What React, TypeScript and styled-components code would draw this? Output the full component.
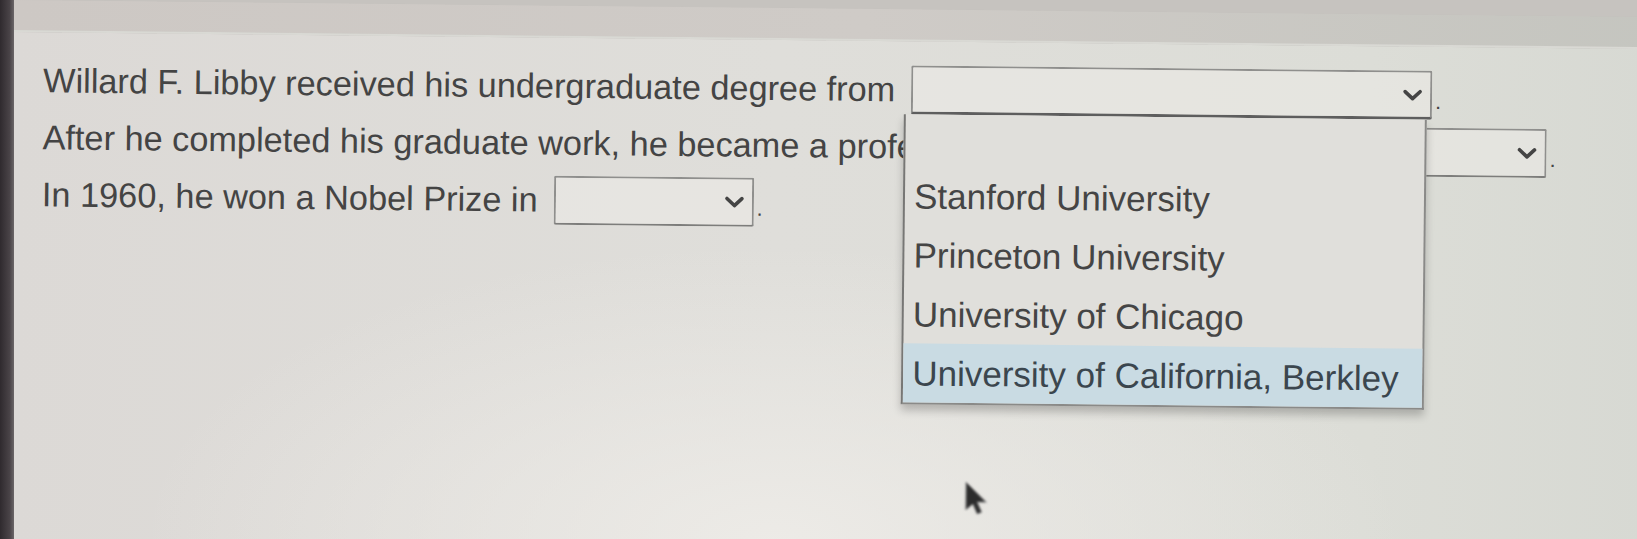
import React from 'react';
import styled, { createGlobalStyle } from 'styled-components';

const GlobalStyle = createGlobalStyle`
  html, body {
    margin: 0;
    padding: 0;
    overflow: hidden;
    background: #c8c4c1;
  }
`;

const Frame = styled.div`
  display: flex;
  width: 100vw;
  height: 100vh;
  overflow: hidden;
`;

// dark monitor edge on the left
const Bezel = styled.div`
  width: 14px;
  flex-shrink: 0;
  background: linear-gradient(90deg, #2f2a2e 0%, #4a4448 70%, #6b6668 100%);
`;

const Viewport = styled.div`
  position: relative;
  flex: 1;
  overflow: hidden;
  background: #c6c3bf;
`;

// the whole screen sits a little tilted
const Screen = styled.div`
  width: 1700px;
  height: 620px;
  display: flex;
  flex-direction: column;
  transform: rotate(0.6deg);
  transform-origin: 0 0;
`;

const TopBar = styled.div`
  height: 30px;
  flex-shrink: 0;
  background: linear-gradient(90deg, #cdc8c4 0%, #cfcbc7 50%, #c4c5bf 100%);
  border-bottom: 2px solid #d9d9d4;
  box-shadow: 0 1px 2px rgba(0, 0, 0, 0.08);
`;

const Sheet = styled.div`
  position: relative;
  flex: 1;
  display: flex;
  flex-direction: column;
  padding: 20px 0 0 30px;
  background:
    radial-gradient(ellipse 900px 420px at 45% 85%, rgba(238, 236, 232, 0.9), rgba(238, 236, 232, 0) 70%),
    linear-gradient(90deg, #dcd9d6 0%, #dfdeda 45%, #dcddd7 80%, #d6d8d2 100%);
  font-family: "Liberation Sans", Arial, sans-serif;
  font-size: 34.3px;
  color: #444444;
`;

const Line = styled.div`
  display: flex;
  align-items: center;
  height: 57px;
  white-space: nowrap;
`;

const Text = styled.span`
  line-height: 1;
`;

const Period = styled.span`
  line-height: 1;
  margin-left: 3px;
  font-size: 22px;
  transform: translateY(6px);
`;

const Anchor = styled.div`
  position: relative;
  margin-left: 16px;
`;

const SelectBox = styled.div<{ $width: number; $open?: boolean }>`
  box-sizing: border-box;
  width: ${p => p.$width}px;
  height: 49px;
  margin-left: ${p => (p.$open ? 0 : 16)}px;
  display: flex;
  align-items: center;
  justify-content: flex-end;
  padding-right: 7px;
  border: 2px solid #8f8f8d;
  border-bottom: ${p => (p.$open ? '3px solid #5f5f5f' : '2px solid #7d7d7b')};
  border-radius: 2px;
  background: rgba(236, 235, 231, 0.55);
`;

const Listbox = styled.ul`
  position: absolute;
  top: 100%;
  left: -7px;
  width: 523px;
  box-sizing: border-box;
  margin: 0;
  padding: 0;
  list-style: none;
  background: #e0dfdb;
  border: 2px solid #8a8a88;
  border-top: none;
  border-left-color: #777775;
  box-shadow: 0 6px 8px rgba(0, 0, 0, 0.22);
  z-index: 2;
`;

const Option = styled.li<{ $active?: boolean }>`
  height: 59px;
  display: flex;
  align-items: center;
  padding-left: 9px;
  font-size: 35px;
  line-height: 1;
  color: ${p => (p.$active ? '#3b464e' : '#454545')};
  background: ${p => (p.$active ? '#c9dbe3' : 'transparent')};

  &:first-child {
    height: 52px;
  }
`;

const Pointer = styled.svg`
  position: absolute;
  left: 955px;
  top: 438px;
  filter: blur(1px);
`;

const Chevron = () => (
  <svg width="21" height="13" viewBox="0 0 21 13">
    <polyline points="3,3 10.5,10 18,3" fill="none" stroke="#444444" strokeWidth="3.6" strokeLinecap="round" strokeLinejoin="round" />
  </svg>
);

const schools = [
  '',
  'Stanford University',
  'Princeton University',
  'University of Chicago',
  'University of California, Berkley',
];

const App = () => {
  const selected = 4;

  return (
    <Frame>
      <GlobalStyle />
      <Bezel />
      <Viewport>
        <Screen>
          <TopBar />
          <Sheet>
            <Line>
              <Text>Willard F. Libby received his undergraduate degree from</Text>
              <Anchor>
                <SelectBox $width={521} $open>
                  <Chevron />
                </SelectBox>
                <Listbox>
                  {schools.map((name, i) => (
                    <Option key={i} $active={i === selected}>{name}</Option>
                  ))}
                </Listbox>
              </Anchor>
              <Period>.</Period>
            </Line>
            <Line>
              <Text>After he completed his graduate work, he became a professor at</Text>
              <SelectBox $width={512}>
                <Chevron />
              </SelectBox>
              <Period>.</Period>
            </Line>
            <Line>
              <Text>In 1960, he won a Nobel Prize in</Text>
              <SelectBox $width={200}>
                <Chevron />
              </SelectBox>
              <Period>.</Period>
            </Line>
            <Pointer width="28" height="38" viewBox="0 0 28 38">
              <path d="M2 2 L2 30 L9 24 L13.5 34 L18 32 L13.5 22 L22.5 22 Z" fill="#2c2c2c" stroke="#8f8f8f" strokeWidth="1" />
            </Pointer>
          </Sheet>
        </Screen>
      </Viewport>
    </Frame>
  );
};

export default App;
